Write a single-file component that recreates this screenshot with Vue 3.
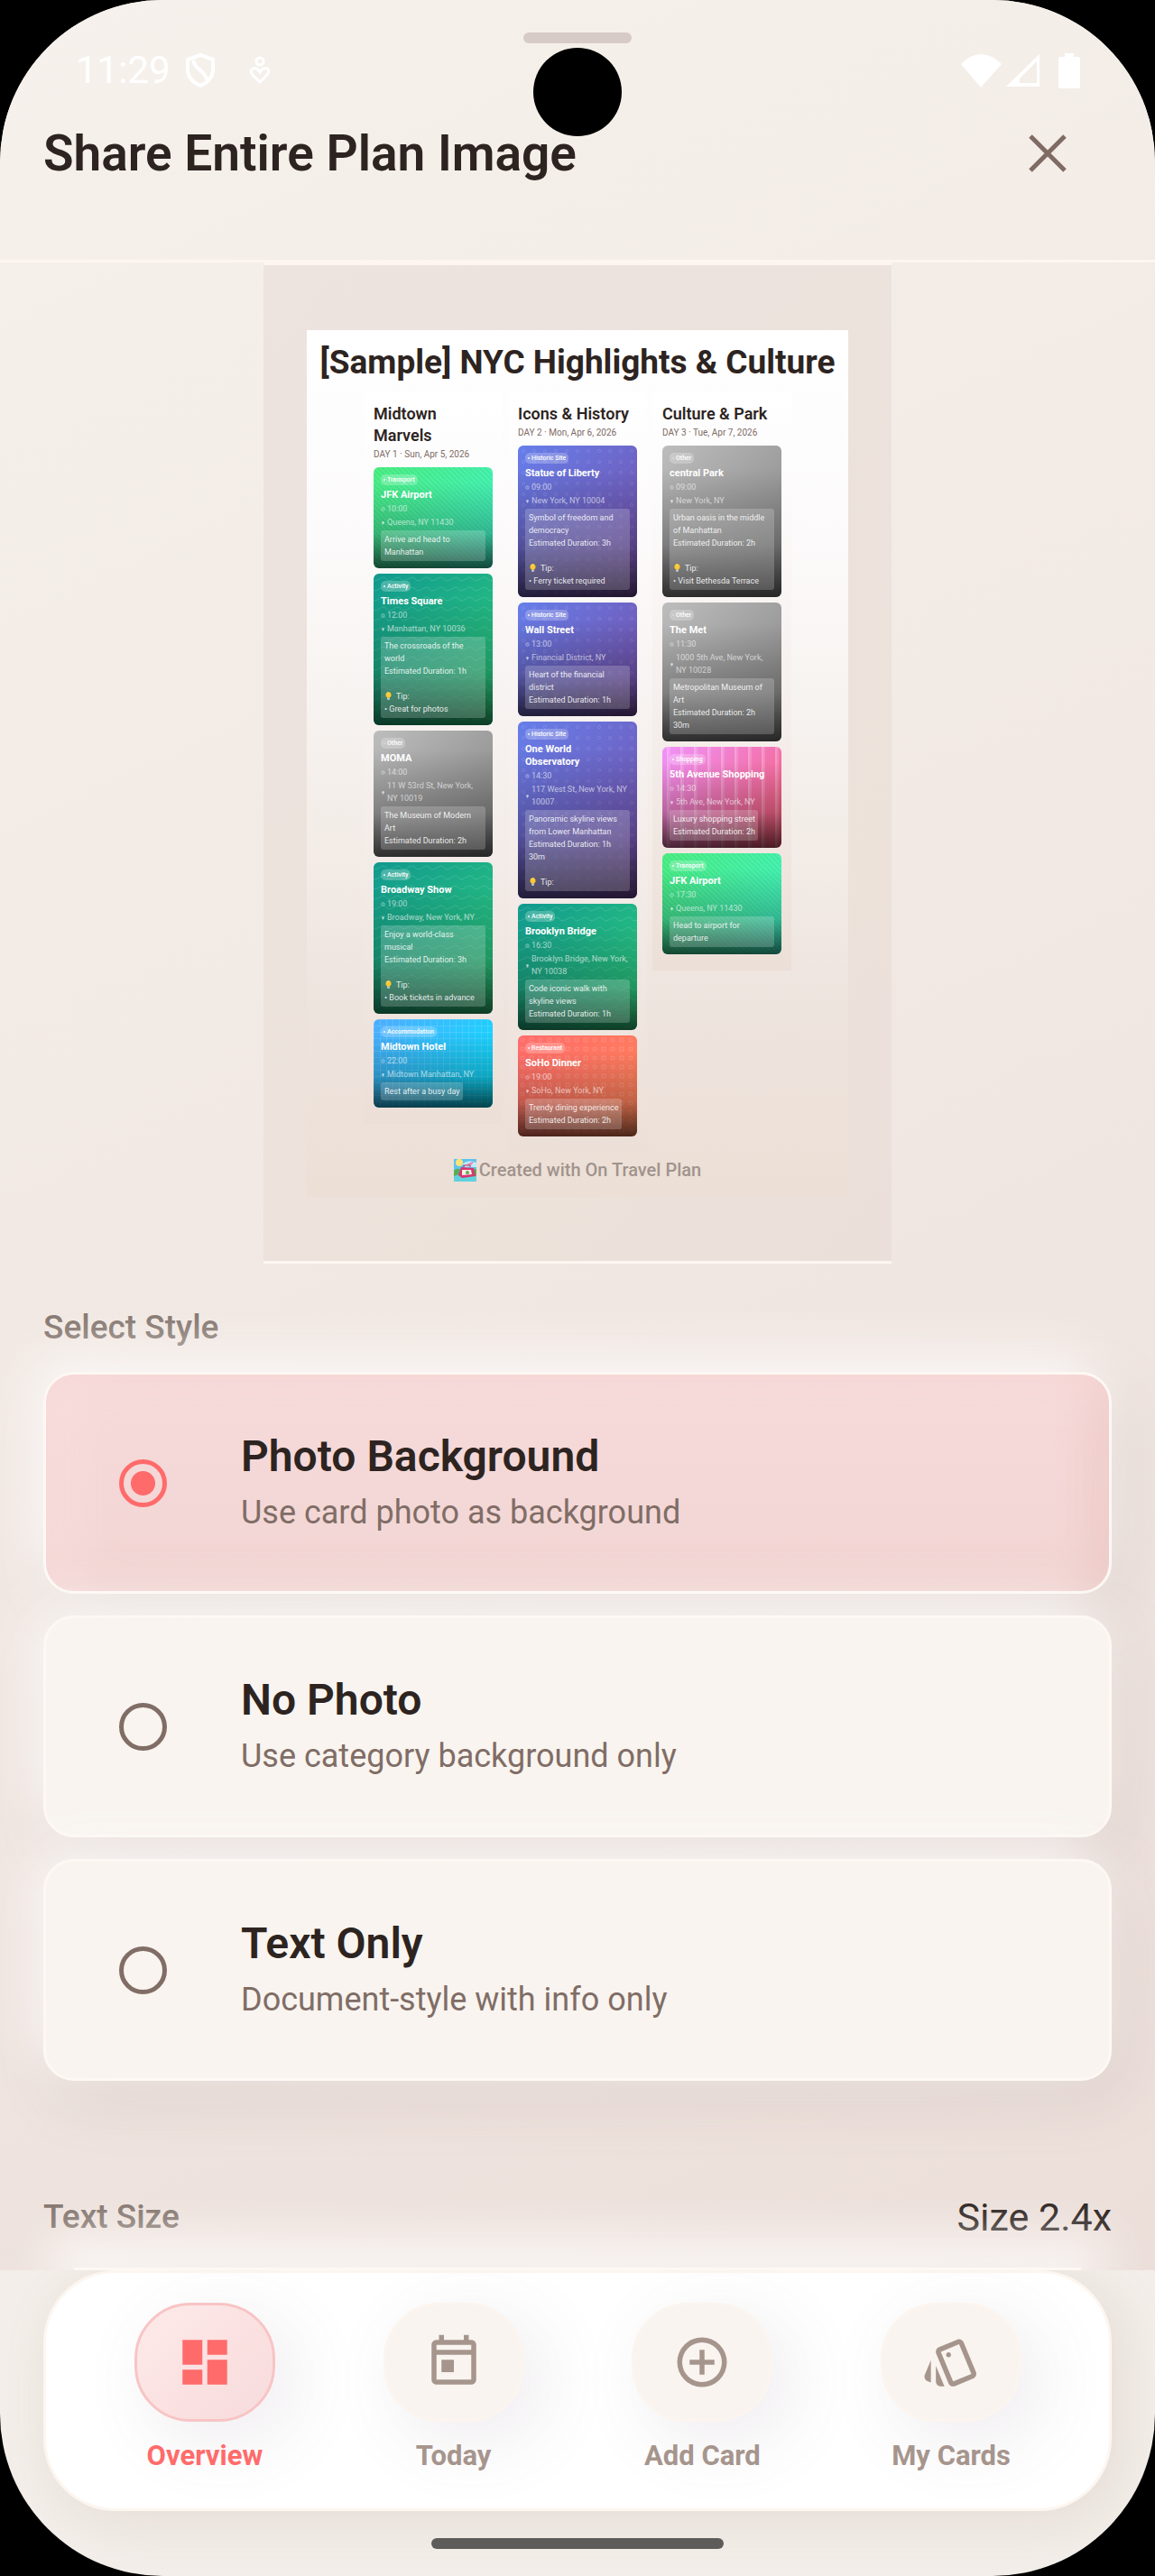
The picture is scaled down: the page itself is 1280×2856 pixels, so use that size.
<script setup>
import { ref } from 'vue'

const style = ref('photo')
const active = ref('Overview')

const styles = [
  { id: 'photo', title: 'Photo Background', text: 'Use card photo as background' },
  { id: 'none', title: 'No Photo', text: 'Use category background only' },
  { id: 'text', title: 'Text Only', text: 'Document-style with info only' }
]

const tabs = ['Overview', 'Today', 'Add Card', 'My Cards']

const days = [
  {
    title: 'Midtown Marvels',
    date: 'DAY 1 · Sun, Apr 5, 2026',
    cards: [
      { kind: 'transport', tag: 'Transport', name: 'JFK Airport', time: '10:00', place: 'Queens, NY 11430', note: ['Arrive and head to Manhattan'] },
      { kind: 'activity', tag: 'Activity', name: 'Times Square', time: '12:00', place: 'Manhattan, NY 10036', note: ['The crossroads of the world', 'Estimated Duration: 1h', '', 'Tip:', '• Great for photos'] },
      { kind: 'other', tag: 'Other', name: 'MOMA', time: '14:00', place: '11 W 53rd St, New York,\nNY 10019', note: ['The Museum of Modern Art', 'Estimated Duration: 2h'] },
      { kind: 'activity', tag: 'Activity', name: 'Broadway Show', time: '19:00', place: 'Broadway, New York, NY', note: ['Enjoy a world-class musical', 'Estimated Duration: 3h', '', 'Tip:', '• Book tickets in advance'] },
      { kind: 'stay', tag: 'Accommodation', name: 'Midtown Hotel', time: '22:00', place: 'Midtown Manhattan, NY', note: ['Rest after a busy day'] }
    ]
  },
  {
    title: 'Icons & History',
    date: 'DAY 2 · Mon, Apr 6, 2026',
    cards: [
      { kind: 'historic', tag: 'Historic Site', name: 'Statue of Liberty', time: '09:00', place: 'New York, NY 10004', note: ['Symbol of freedom and democracy', 'Estimated Duration: 3h', '', 'Tip:', '• Ferry ticket required'] },
      { kind: 'historic', tag: 'Historic Site', name: 'Wall Street', time: '13:00', place: 'Financial District, NY', note: ['Heart of the financial district', 'Estimated Duration: 1h'] },
      { kind: 'historic', tag: 'Historic Site', name: 'One World\nObservatory', time: '14:30', place: '117 West St, New York, NY\n10007', note: ['Panoramic skyline views from Lower Manhattan', 'Estimated Duration: 1h 30m', '', 'Tip:'] },
      { kind: 'activity', tag: 'Activity', name: 'Brooklyn Bridge', time: '16:30', place: 'Brooklyn Bridge, New York,\nNY 10038', note: ['Code iconic walk with skyline views', 'Estimated Duration: 1h'] },
      { kind: 'food', tag: 'Restaurant', name: 'SoHo Dinner', time: '19:00', place: 'SoHo, New York, NY', note: ['Trendy dining experience', 'Estimated Duration: 2h'] }
    ]
  },
  {
    title: 'Culture & Park',
    date: 'DAY 3 · Tue, Apr 7, 2026',
    cards: [
      { kind: 'other', tag: 'Other', name: 'central Park', time: '09:00', place: 'New York, NY', note: ['Urban oasis in the middle of Manhattan', 'Estimated Duration: 2h', '', 'Tip:', '• Visit Bethesda Terrace'] },
      { kind: 'other', tag: 'Other', name: 'The Met', time: '11:30', place: '1000 5th Ave, New York,\nNY 10028', note: ['Metropolitan Museum of Art', 'Estimated Duration: 2h 30m'] },
      { kind: 'shopping', tag: 'Shopping', name: '5th Avenue Shopping', time: '14:30', place: '5th Ave, New York, NY', note: ['Luxury shopping street', 'Estimated Duration: 2h'] },
      { kind: 'transport', tag: 'Transport', name: 'JFK Airport', time: '17:30', place: 'Queens, NY 11430', note: ['Head to airport for departure'] }
    ]
  }
]
</script>

<template>
  <div class="screen">
    <svg class="defs" width="0" height="0" aria-hidden="true">
      <defs>
        <pattern id="p-transport" width="4" height="4" patternUnits="userSpaceOnUse" patternTransform="rotate(-45)">
          <path d="M0 0V4" stroke="#fff" stroke-opacity=".16" stroke-width="2" />
        </pattern>
        <pattern id="p-activity" width="16" height="11" patternUnits="userSpaceOnUse">
          <path d="M0 8Q4 8 8 5T16 8" fill="none" stroke="#fff" stroke-opacity=".13" />
        </pattern>
        <pattern id="p-historic" width="12" height="12" patternUnits="userSpaceOnUse">
          <path d="M6 4L8 6L6 8L4 6Z" fill="none" stroke="#fff" stroke-opacity=".12" />
        </pattern>
        <pattern id="p-food" width="20" height="10" patternUnits="userSpaceOnUse">
          <circle cx="5" cy="5" r="2" fill="none" stroke="#fff" stroke-opacity=".16" />
          <path d="M13 3H17V7H13Z" fill="none" stroke="#fff" stroke-opacity=".16" />
        </pattern>
        <pattern id="p-stay" width="7" height="7" patternUnits="userSpaceOnUse">
          <path d="M0 0H7M0 0V7" fill="none" stroke="#fff" stroke-opacity=".24" />
        </pattern>
        <pattern id="p-shopping" width="15" height="10" patternUnits="userSpaceOnUse">
          <path d="M7 0V10" stroke="#fff" stroke-opacity=".14" stroke-width="4" />
          <path d="M6 0V10" stroke="#fff" stroke-opacity=".3" />
        </pattern>
      </defs>
    </svg>

    <div class="status">
      <div class="status-side">
        <span>11:29</span>
        <svg class="shield" viewBox="0 0 34 40"><path d="M17 3L31 8V19Q31 31 17 37Q3 31 3 19V8Z" fill="none" stroke="#fff" stroke-width="4" /><path d="M9 9Q11 16 17 20Q23 25 24 30" fill="none" stroke="#fff" stroke-width="4" /></svg>
        <svg class="care" viewBox="0 0 24 32"><circle cx="12" cy="6" r="4" fill="none" stroke="#fff" stroke-width="3" /><path d="M12 29L4 21Q0 15 5 14Q9 13 12 18Q15 13 19 14Q24 15 20 21Z" fill="none" stroke="#fff" stroke-width="3" /></svg>
      </div>
      <div class="status-side">
        <svg class="wifi" viewBox="0 0 45 37"><path d="M0 11Q22 -11 45 11L22 37Z" fill="#fff" /></svg>
        <svg class="signal" viewBox="0 0 37 36"><path d="M37 0V36H0ZM34 8L15 27V32H34Z" fill="#fff" fill-rule="evenodd" /></svg>
        <svg class="battery" viewBox="0 0 24 39"><path d="M7 0H17V4H22Q24 4 24 6V37Q24 39 22 39H2Q0 39 0 37V6Q0 4 2 4H7Z" fill="#fff" /></svg>
      </div>
    </div>
    <div class="camera"></div>

    <main class="sheet">
      <header class="header">
        <div class="handle"></div>
        <div class="header-row">
          <h1>Share Entire Plan Image</h1>
          <button class="close" type="button" aria-label="Close">
            <svg viewBox="0 0 42 42"><path d="M2 2L40 40M40 2L2 40" stroke="#806b64" stroke-width="5" /></svg>
          </button>
        </div>
      </header>

      <section class="preview">
        <div class="plan">
          <h2>[Sample] NYC Highlights &amp; Culture</h2>
          <div class="days">
            <div v-for="day in days" :key="day.title" class="day">
              <h3>{{ day.title }}</h3>
              <p class="date">{{ day.date }}</p>
              <article v-for="card in day.cards" :key="card.name" class="card" :class="card.kind">
                <svg v-if="card.kind !== 'other'" class="pattern" aria-hidden="true"><rect width="100%" height="100%" :fill="`url(#p-${card.kind})`" /></svg>
                <div class="shade"></div>
                <div class="tag"><i :class="card.kind"></i>{{ card.tag }}</div>
                <h4>{{ card.name }}</h4>
                <div class="meta">
                  <svg viewBox="0 0 5 5"><circle cx="2.5" cy="2.5" r="1.8" fill="none" stroke="#fff" stroke-width=".7" /><path d="M2.5 1.5V2.6L3.3 3" fill="none" stroke="#fff" stroke-width=".5" /></svg>
                  <span>{{ card.time }}</span>
                </div>
                <div class="meta place">
                  <svg viewBox="0 0 5 5"><path d="M2.5 5L1 2.4A1.5 1.5 0 1 1 4 2.4Z" fill="#fff" /></svg>
                  <span>{{ card.place }}</span>
                </div>
                <div class="note">
                  <p v-for="(line, n) in card.note" :key="n">
                    <template v-if="line === 'Tip:'">
                      <svg class="bulb" viewBox="0 0 10 10"><path d="M5 0A3.6 3.6 0 0 0 3.2 6.6V7.4H6.8V6.6A3.6 3.6 0 0 0 5 0Z" fill="#fdc92e" /><path d="M3.5 2.5Q4 1.3 5 1.2" fill="none" stroke="#fff3b0" /><path d="M3.4 7.4H6.6V9L5.8 10H4.2L3.4 9Z" fill="#b9cbd2" /></svg>
                    </template>{{ line }}
                  </p>
                </div>
              </article>
            </div>
          </div>
          <div class="credit">
            <svg viewBox="0 0 25 25">
              <rect width="25" height="25" fill="#5cc4ee" />
              <circle cx="6" cy="4" r="4" fill="#fbe37a" />
              <path d="M10 5Q16 0 25 4V9H12Z" fill="#bfe9fb" />
              <path d="M14 6L23 2L19 7Z" fill="#e58bb4" />
              <path d="M0 13Q5 8 9 14L25 11V20H0Z" fill="#58ad57" />
              <path d="M0 19Q12 14 25 19V25H0Z" fill="#62d1dc" />
              <path d="M8 9L22 10L24 19L9 21L5 18Z" fill="#d8366f" />
              <path d="M9 12L19 12L20 17L9 18Z" fill="#fbeee2" />
              <path d="M11 9V7H18V9" fill="none" stroke="#b5285c" />
              <circle cx="15" cy="15" r="2" fill="#5aa95a" />
            </svg>
            <span>Created with On Travel Plan</span>
          </div>
        </div>
      </section>

      <section class="controls">
        <h5 id="style-label">Select Style</h5>
        <div class="options" role="radiogroup" aria-labelledby="style-label">
          <label v-for="item in styles" :key="item.id" class="option" :class="{ selected: style === item.id }">
            <input v-model="style" type="radio" name="style" :value="item.id" />
            <span class="option-text">
              <b>{{ item.title }}</b>
              <small>{{ item.text }}</small>
            </span>
          </label>
        </div>
        <div class="size-row">
          <h5>Text Size</h5>
          <output>Size 2.4x</output>
        </div>
        <div class="slider-card"></div>
      </section>
    </main>

    <footer class="bottom">
      <nav class="tabs">
        <button v-for="tab in tabs" :key="tab" class="tab" :class="{ active: active === tab }" type="button" @click="active = tab">
          <span class="pill">
            <svg viewBox="0 0 24 24">
              <path v-if="tab === 'Overview'" d="M3 13H11V3H3ZM3 21H11V15H3ZM13 21H21V11H13ZM13 3V9H21V3Z" />
              <path v-else-if="tab === 'Today'" d="M19 3H18V1H16V3H8V1H6V3H5C3.9 3 3 3.9 3 5V19C3 20.1 3.9 21 5 21H19C20.1 21 21 20.1 21 19V5C21 3.9 20.1 3 19 3ZM19 19H5V9H19ZM19 7H5V5H19ZM7 11H12V16H7Z" />
              <path v-else-if="tab === 'Add Card'" d="M13 7H11V11H7V13H11V17H13V13H17V11H13ZM12 2A10 10 0 1 0 12 22A10 10 0 0 0 12 2ZM12 20A8 8 0 1 1 12 4A8 8 0 0 1 12 20Z" />
              <path v-else d="M2.53 19.65L3.87 20.21V11.18L1.44 17.04C1.03 18.06 1.52 19.23 2.53 19.65ZM22.03 15.95L17.07 3.98C16.76 3.23 16.03 2.77 15.26 2.75C15 2.75 14.73 2.79 14.47 2.9L7.1 5.95C6.35 6.26 5.89 6.97 5.87 7.74C5.86 8.01 5.91 8.29 6.02 8.55L10.98 20.52C11.29 21.28 12.03 21.74 12.81 21.75C13.07 21.75 13.33 21.7 13.58 21.6L20.94 18.55C21.96 18.13 22.45 16.96 22.03 15.95ZM12.83 19.75L7.87 7.79L15.22 4.75H15.23L20.18 16.7ZM11 8A1 1 0 1 1 10.99 8ZM5.88 19.75C5.88 20.85 6.78 21.75 7.88 21.75H9.33L5.88 13.41Z" />
            </svg>
          </span>
          <span class="tab-name">{{ tab }}</span>
        </button>
      </nav>
      <div class="home-bar"></div>
    </footer>
  </div>
</template>

<style>
html,
body {
  background: #000;
}
</style>

<style scoped>
.screen,
.screen * {
  box-sizing: border-box;
}

.screen {
  position: relative;
  overflow: hidden;
  border-radius: 180px;
  background: #f3eee9;
  color: #2d2421;
  font-family: Roboto, 'Liberation Sans', sans-serif;
}

h1, h2, h3, h4, h5, p {
  margin: 0;
}

button {
  padding: 0;
  border: 0;
  background: none;
  font-family: inherit;
}

svg {
  display: block;
  flex: none;
}

.defs {
  position: absolute;
}

/* system overlays */
.status {
  position: absolute;
  z-index: 2;
  top: 54px;
  left: 0;
  right: 0;
  display: flex;
  justify-content: space-between;
  padding: 0 83px 0 84px;
  color: #fff;
  font-size: 42px;
  line-height: 48px;
}

.status-side {
  display: flex;
  align-items: center;
}

.shield {
  width: 34px;
  height: 40px;
  margin: 0 37px 0 16px;
}

.care {
  width: 24px;
  height: 32px;
}

.wifi {
  width: 45px;
  height: 37px;
}

.signal {
  width: 37px;
  height: 36px;
  margin: 0 21px 0 5px;
}

.battery {
  width: 24px;
  height: 39px;
}

.camera {
  position: absolute;
  z-index: 3;
  top: 53px;
  left: 50%;
  width: 98px;
  height: 98px;
  margin-left: -49px;
  border-radius: 50%;
  background: #000;
}

/* sheet */
.sheet {
  overflow: hidden;
  background: linear-gradient(155deg, #f6f1ec 0%, #f3ece6 30%, #f0e6e1 62%, #ecdfda 100%);
}

.header {
  padding: 36px 48px 84px;
  border-bottom: 3px solid #fdf6f0;
}

.handle {
  width: 120px;
  height: 12px;
  margin: 0 auto 88px;
  border-radius: 6px;
  background: #d7cbc7;
}

.header-row {
  display: flex;
  align-items: center;
  justify-content: space-between;
}

h1 {
  font-size: 55px;
  font-weight: 600;
  line-height: 68px;
}

.close {
  margin-right: 50px;
}

.close svg {
  width: 42px;
  height: 42px;
}

.preview {
  width: 696px;
  margin: 0 auto;
  padding: 72px 48px 71px;
  border: solid #fdf6f0;
  border-width: 3px 0;
  background: linear-gradient(135deg, #ede3df, #ece2da 75%, #ebdfda);
}

.plan {
  padding: 13px 0 17px;
  background: linear-gradient(#fff 0%, #fcfafa 25%, #f5f0ec 50%, #eee4de 78%, #ecdfd6 100%);
}

h2 {
  font-size: 37px;
  font-weight: 700;
  line-height: 46px;
  text-align: center;
  white-space: nowrap;
}

.days {
  display: flex;
  justify-content: center;
  align-items: flex-start;
  gap: 6px;
  margin-top: 10px;
}

.day {
  width: 154px;
  padding: 12px 11px;
  background: linear-gradient(#fff, #fcfafa 20%, #f4edea 60%, #ecdfd7);
}

h3 {
  font-size: 18px;
  font-weight: 600;
  line-height: 24px;
}

.date {
  margin: 2px 0 7px;
  color: #7d6b65;
  font-size: 10px;
  line-height: 14px;
  white-space: nowrap;
}

.card {
  position: relative;
  display: flex;
  flex-direction: column;
  align-items: flex-start;
  overflow: hidden;
  margin-bottom: 6px;
  padding: 8px;
  border-radius: 6px;
  color: #fff;
  font-size: 9px;
  line-height: 14px;
}

.card > * {
  position: relative;
}

.card.transport { background: linear-gradient(135deg, #43e97b, #38f0c8); }
.card.activity { background: linear-gradient(135deg, #11998e, #2fd07c); }
.card.other { background: linear-gradient(135deg, #bdbdbd, #808080); }
.card.stay { background: linear-gradient(135deg, #4facfe, #00e4fe); }
.card.historic { background: linear-gradient(135deg, #667eea, #764ba2); }
.card.food { background: linear-gradient(135deg, #ff6b6b, #ff8556); }
.card.shopping { background: linear-gradient(135deg, #f093fb, #f5576c); }

.card .pattern,
.card .shade {
  position: absolute;
  inset: 0;
  width: 100%;
  height: 100%;
}

.card .shade {
  background: linear-gradient(rgba(0, 0, 0, 0) 15%, rgba(0, 0, 0, .24) 65%, rgba(0, 0, 0, .7));
}

.tag {
  display: flex;
  align-items: center;
  gap: 2px;
  padding: 0 3px;
  border-radius: 5px;
  background: rgba(255, 255, 255, .24);
  font-size: 7px;
  font-weight: 500;
  line-height: 12px;
}

.tag i {
  width: 2px;
  height: 2px;
  background: rgba(255, 255, 255, .7);
}

.tag i.other {
  background: rgba(255, 255, 255, .2);
}

h4 {
  margin: 4px 0 1px;
  font-size: 11px;
  font-weight: 700;
  line-height: 14px;
  white-space: pre;
}

.meta {
  display: flex;
  align-items: center;
  gap: 2px;
  opacity: .6;
  white-space: pre;
}

.meta svg {
  width: 5px;
  height: 5px;
}

.place {
  margin: 1px 0 2px;
}

.note {
  max-width: 116px;
  padding: 3px 3px 3px 4px;
  border-radius: 3px;
  background: rgba(255, 255, 255, .2);
  color: rgba(255, 255, 255, .88);
}

.note p {
  min-height: 14px;
}

.bulb {
  display: inline-block;
  width: 9px;
  height: 9px;
  margin-right: 4px;
  vertical-align: -1px;
}

.credit {
  display: flex;
  align-items: center;
  justify-content: center;
  gap: 3px;
  margin-top: 7px;
  color: #a1938c;
  font-size: 20px;
  font-weight: 500;
  line-height: 25px;
}

.credit svg {
  width: 25px;
  height: 25px;
}

/* controls */
.controls {
  padding: 50px 48px 0;
}

h5 {
  color: #857770;
  font-size: 37px;
  font-weight: 500;
  line-height: 42px;
}

.options {
  display: flex;
  flex-direction: column;
  gap: 24px;
  margin-top: 28px;
}

.option {
  position: relative;
  display: flex;
  align-items: center;
  gap: 82px;
  height: 246px;
  padding: 0 81px;
  border: 3px solid #fdf8f3;
  border-radius: 34px;
  background: #f9f4ef;
  box-shadow: -12px -16px 60px rgba(255, 255, 255, .8), 14px 18px 64px rgba(160, 135, 130, .22);
}

.option.selected {
  background: linear-gradient(#f6dada, #f2d6d4);
  box-shadow: -12px -16px 60px rgba(255, 255, 255, .85), 14px 18px 64px rgba(160, 135, 130, .2), inset 24px 12px 60px rgba(255, 230, 230, .5), inset -12px -4px 48px rgba(215, 160, 150, .3);
}

.option input {
  appearance: none;
  width: 53px;
  height: 53px;
  margin: 0;
  border: 5px solid #806d66;
  border-radius: 50%;
}

.option input:checked {
  border-color: #ff6b6b;
  background: radial-gradient(circle, #ff6b6b 13px, transparent 14px);
}

.option-text {
  display: flex;
  flex-direction: column;
  gap: 8px;
}

.option b {
  font-size: 48px;
  font-weight: 600;
  line-height: 58px;
}

.option small {
  color: #806d66;
  font-size: 36px;
  line-height: 50px;
}

.size-row {
  display: flex;
  align-items: center;
  justify-content: space-between;
  margin-top: 126px;
}

.size-row output {
  font-size: 43px;
  line-height: 50px;
}

.slider-card {
  position: relative;
  height: 3px;
  margin: 31px 34px 0;
  background: #fdf8f3;
  box-shadow: 0 -4px 52px 26px rgba(255, 255, 255, .8);
}

/* bottom navigation */
.bottom {
  padding: 0 48px 30px;
}

.tabs {
  display: flex;
  padding: 33px 37px 40px 38px;
  border: 3px solid #fdf6f0;
  border-radius: 80px;
  background: #fff;
  box-shadow: 12px 12px 54px rgba(165, 145, 135, .18);
}

.tab {
  display: flex;
  flex: 1;
  flex-direction: column;
  align-items: center;
  gap: 20px;
  color: #a6958d;
}

.pill {
  display: flex;
  align-items: center;
  justify-content: center;
  width: 156px;
  height: 132px;
  border: 3px solid #fcf5ef;
  border-radius: 62px;
  background: #f9f4ef;
  box-shadow: 20px 20px 80px rgba(120, 100, 120, .12);
}

.pill svg {
  width: 66px;
  height: 66px;
  fill: currentColor;
}

.tab-name {
  font-size: 31px;
  font-weight: 700;
  line-height: 36px;
}

.tab.active {
  color: #ff6b6b;
}

.active .pill {
  border-color: #f8c4c5;
  background: linear-gradient(135deg, #fdeaea, #fbe0e0 60%, #f7dcde);
}

.home-bar {
  width: 324px;
  height: 12px;
  margin: 30px auto 0;
  border-radius: 6px;
  background: #5d5c5a;
}
</style>
